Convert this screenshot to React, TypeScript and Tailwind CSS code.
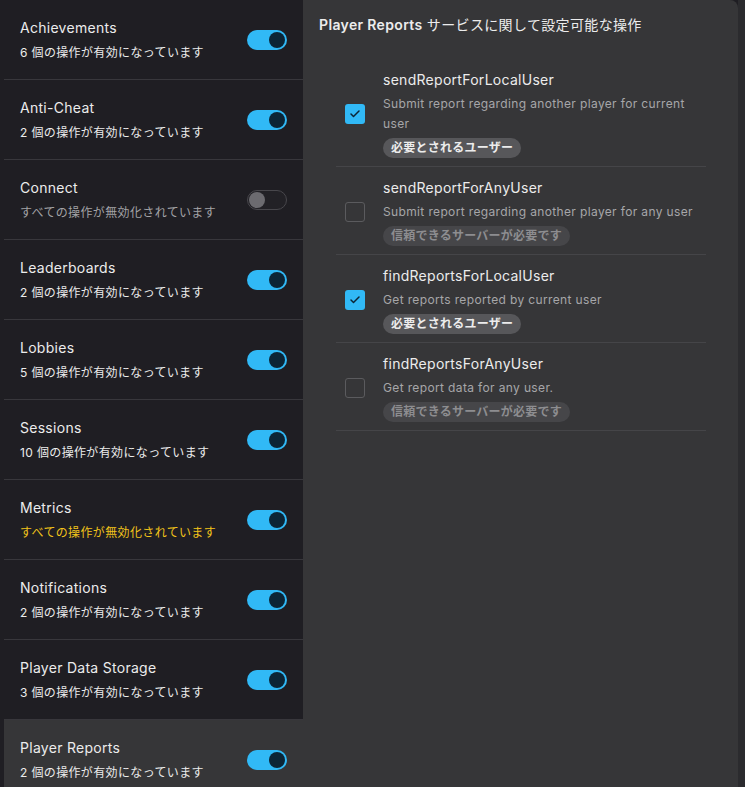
import React from 'react';
import { Check } from 'lucide-react';

type Service = { name: string; status: string; tone: 'on' | 'off' | 'warn'; enabled: boolean; selected?: boolean };

const services: Service[] = [
  { name: 'Achievements', status: '6 個の操作が有効になっています', tone: 'on', enabled: true },
  { name: 'Anti-Cheat', status: '2 個の操作が有効になっています', tone: 'on', enabled: true },
  { name: 'Connect', status: 'すべての操作が無効化されています', tone: 'off', enabled: false },
  { name: 'Leaderboards', status: '2 個の操作が有効になっています', tone: 'on', enabled: true },
  { name: 'Lobbies', status: '5 個の操作が有効になっています', tone: 'on', enabled: true },
  { name: 'Sessions', status: '10 個の操作が有効になっています', tone: 'on', enabled: true },
  { name: 'Metrics', status: 'すべての操作が無効化されています', tone: 'warn', enabled: true },
  { name: 'Notifications', status: '2 個の操作が有効になっています', tone: 'on', enabled: true },
  { name: 'Player Data Storage', status: '3 個の操作が有効になっています', tone: 'on', enabled: true },
  { name: 'Player Reports', status: '2 個の操作が有効になっています', tone: 'on', enabled: true, selected: true },
];

type Operation = { name: string; description: string; checked: boolean; badge: string };

const operations: Operation[] = [
  {
    name: 'sendReportForLocalUser',
    description: 'Submit report regarding another player for current user',
    checked: true,
    badge: '必要とされるユーザー',
  },
  {
    name: 'sendReportForAnyUser',
    description: 'Submit report regarding another player for any user',
    checked: false,
    badge: '信頼できるサーバーが必要です',
  },
  {
    name: 'findReportsForLocalUser',
    description: 'Get reports reported by current user',
    checked: true,
    badge: '必要とされるユーザー',
  },
  {
    name: 'findReportsForAnyUser',
    description: 'Get report data for any user.',
    checked: false,
    badge: '信頼できるサーバーが必要です',
  },
];

const Toggle: React.FC<{ on: boolean }> = ({ on }) =>
  on ? (
    <div className="w-10 h-5 rounded-full bg-[#31b9f6] flex items-center justify-end px-[2px]">
      <div className="w-4 h-4 rounded-full bg-[#0c2536]" />
    </div>
  ) : (
    <div className="w-10 h-5 rounded-full border border-[#48474c] bg-[#222126] flex items-center px-[1px]">
      <div className="w-4 h-4 rounded-full bg-[#6c6b70]" />
    </div>
  );

export default function App() {
  return (
    <div
      className="h-[787px] w-[745px] overflow-hidden flex bg-[#1f1e23] pl-1"
      style={{ fontFamily: 'Inter, "Noto Sans CJK JP", sans-serif' }}
    >
      {/* Services */}
      <div className="w-[299px] shrink-0 flex flex-col">
        {services.map((s) => (
          <div
            key={s.name}
            className={`h-20 shrink-0 flex items-center justify-between pl-4 pr-4 border-b border-[#38373c] ${
              s.selected ? 'bg-[#363638] border-transparent' : ''
            }`}
          >
            <div className="flex flex-col gap-[7px] -mt-[1px]">
              <div className="text-sm leading-5 tracking-[0.02em] text-[#ececec]">{s.name}</div>
              <div
                className={`text-xs leading-4 tracking-[0.03em] ${
                  s.tone === 'warn' ? 'text-[#f2c41a]' : s.tone === 'off' ? 'text-[#a3a3a6]' : 'text-[#ececec]'
                }`}
              >
                {s.status}
              </div>
            </div>
            <Toggle on={s.enabled} />
          </div>
        ))}
      </div>

      {/* Operations */}
      <div className="flex-1 bg-[#363638] rounded-tr-lg px-4 pt-[15px]">
        <div className="text-sm leading-5 tracking-[0.025em] text-[#ececec]">
          <span className="font-semibold">Player Reports</span> サービスに関して設定可能な操作
        </div>
        <div className="ml-[17px] w-[370px] mt-[24px]">
          {operations.map((op) => (
            <div key={op.name} className="flex items-center border-b border-[#454548] pt-[11px] pb-2">
              <div className="w-[47px] shrink-0 flex pl-[9px]">
                {op.checked ? (
                  <div className="w-5 h-5 rounded-[3px] bg-[#31b9f6] flex items-center justify-center">
                    <Check className="w-3 h-3 text-[#0c2536]" strokeWidth={3} />
                  </div>
                ) : (
                  <div className="w-5 h-5 rounded-[3px] border border-[#5b5b5e]" />
                )}
              </div>
              <div className="flex flex-col gap-1 pr-2">
                <div className="text-sm leading-5 tracking-[0.02em] text-[#ececec]">{op.name}</div>
                <div className="text-xs leading-5 tracking-[0.03em] text-[#a6a6a9]">{op.description}</div>
                <div className="flex">
                  <span
                    className={`h-5 px-2 rounded-full text-xs leading-5 tracking-[0.02em] font-semibold ${
                      op.checked ? 'bg-[#57575a] text-[#ececec]' : 'bg-[#464649] text-[#8d8d90]'
                    }`}
                  >
                    {op.badge}
                  </span>
                </div>
              </div>
            </div>
          ))}
        </div>
      </div>
      <div className="w-[7px] shrink-0 bg-[#2b2b2e]" />
    </div>
  );
}
